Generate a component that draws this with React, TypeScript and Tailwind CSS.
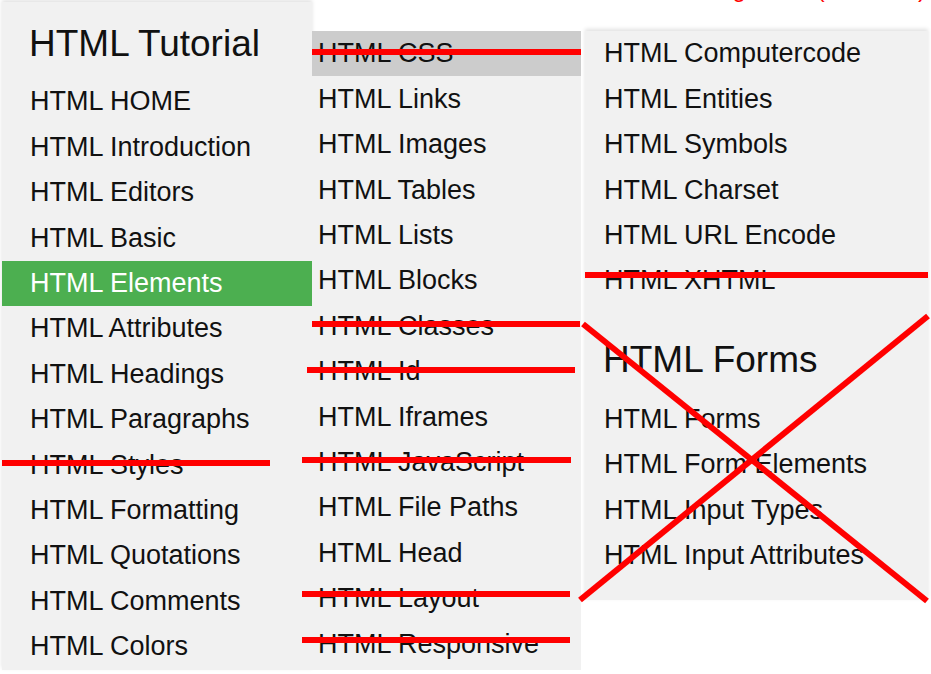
import React from "react";

const colOne = [
  "HTML HOME",
  "HTML Introduction",
  "HTML Editors",
  "HTML Basic",
  "HTML Elements",
  "HTML Attributes",
  "HTML Headings",
  "HTML Paragraphs",
  "HTML Styles",
  "HTML Formatting",
  "HTML Quotations",
  "HTML Comments",
  "HTML Colors",
];

const colTwo = [
  "HTML CSS",
  "HTML Links",
  "HTML Images",
  "HTML Tables",
  "HTML Lists",
  "HTML Blocks",
  "HTML Classes",
  "HTML Id",
  "HTML Iframes",
  "HTML JavaScript",
  "HTML File Paths",
  "HTML Head",
  "HTML Layout",
  "HTML Responsive",
];

const colThree = [
  "HTML Computercode",
  "HTML Entities",
  "HTML Symbols",
  "HTML Charset",
  "HTML URL Encode",
  "HTML XHTML",
];

const forms = ["HTML Forms", "HTML Form Elements", "HTML Input Types", "HTML Input Attributes"];

// red strike-throughs drawn over the menu
const strikes: [number, number, number, number][] = [
  [312, 52, 581, 52],
  [2, 463, 270, 463],
  [585, 275, 928, 275],
  [312, 324, 580, 324],
  [307, 370, 575, 370],
  [302, 460, 571, 460],
  [302, 594, 570, 594],
  [302, 640, 570, 640],
  [583, 324, 927, 601],
  [928, 316, 580, 600],
];

function Row({ label, active, hover, pad }: { label: string; active?: boolean; hover?: boolean; pad: string }) {
  return (
    <div
      className={`flex h-[45.4px] items-center whitespace-nowrap text-[27px] ${pad} ${
        active ? "bg-[#4CAF50] text-white" : hover ? "bg-[#cccccc] text-[#111]" : "text-[#111]"
      }`}
    >
      {label}
    </div>
  );
}

export default function App() {
  return (
    <div
      className="relative h-[674px] w-[931px] overflow-hidden bg-white"
      style={{ fontFamily: '"Liberation Sans", Arial, sans-serif' }}
    >
      <div className="flex items-start">
        <div className="ml-[2px] mt-[2px] h-[668px] w-[310px] overflow-hidden bg-[#f1f1f1] shadow-[0_-2px_4px_rgba(0,0,0,0.12)]">
          <div className="flex h-[77px] items-center pl-[27px] pt-[6px] text-[37px] text-[#111]">HTML Tutorial</div>
          {colOne.map((l) => (
            <Row key={l} label={l} active={l === "HTML Elements"} pad="pl-[28px]" />
          ))}
        </div>
        <div className="mt-[31px] h-[639px] w-[269px] bg-[#f1f1f1]">
          {colTwo.map((l) => (
            <Row key={l} label={l} hover={l === "HTML CSS"} pad="pl-[6px]" />
          ))}
        </div>
        <div className="ml-[4px] mt-[31px] h-[569px] w-[343px] bg-[#f1f1f1] shadow-[0_-2px_4px_rgba(0,0,0,0.12)]">
          {colThree.map((l) => (
            <Row key={l} label={l} pad="pl-[19px]" />
          ))}
          <div className="flex h-[93px] items-center pl-[18px] pt-[20px] text-[37px] text-[#111]">HTML Forms</div>
          {forms.map((l) => (
            <Row key={l} label={l} pad="pl-[19px]" />
          ))}
        </div>
      </div>

      <div className="absolute right-[5px] top-[-23px] whitespace-nowrap text-[24px] leading-none text-[#ff0000]">
        Missing items (removed)
      </div>

      <svg className="pointer-events-none absolute inset-0" width="931" height="674">
        {strikes.map(([x1, y1, x2, y2], i) => (
          <line key={i} x1={x1} y1={y1} x2={x2} y2={y2} stroke="#ff0000" strokeWidth={6} />
        ))}
      </svg>
    </div>
  );
}
